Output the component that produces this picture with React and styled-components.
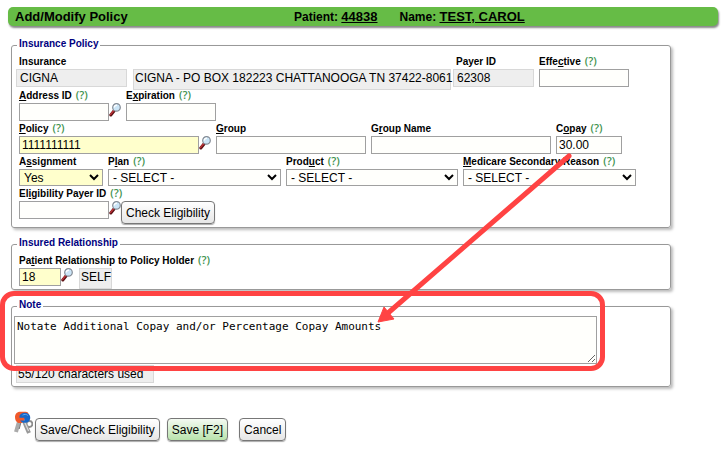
import styled, { createGlobalStyle } from 'styled-components'

const GlobalStyle = createGlobalStyle`
  * {
    box-sizing: border-box;
  }
  body {
    margin: 0;
    background: #fff;
    font-family: 'Liberation Sans', Arial, sans-serif;
    font-size: 12px;
    color: #000;
  }
`

const Page = styled.main`
  padding: 7px 6px 8px 8px;
`

const TitleBar = styled.header`
  display: grid;
  grid-template-columns: 279px auto auto 1fr;
  align-items: center;
  height: 19px;
  padding: 0 7px;
  border-radius: 5px;
  background: #66bc46;
  box-shadow: 1px 2px 2px #888;
  font-size: 12px;
  font-weight: bold;
`
const Title = styled.h1`
  margin: 0;
  font-size: 13px;
`
const TitleItem = styled.div`
  margin-right: 22px;
  white-space: nowrap;
`
const TitleLink = styled.a`
  font-size: 13px;
  color: #000;
`

const Form = styled.form`
  padding: 3px 47px 0 3px;
`
const Panel = styled.fieldset`
  margin: 10px 0 0;
  padding: ${(p) => (p.$note ? 4 : 5)}px 7px ${(p) => (p.$flush ? 0 : 3)}px;
  min-width: 0;
  border: 1px solid #999;
  border-radius: 3px;
  box-shadow: 2px 2px 3px #bbb;
`
const Legend = styled.legend`
  margin-left: -2px;
  padding: 0 2px 2px;
  font-size: 10px;
  font-weight: bold;
  line-height: 10px;
  color: #000080;
`

const Row = styled.div`
  display: flex;
  align-items: flex-start;
  gap: 5px;
  margin-bottom: ${(p) => (p.$tight ? 0 : 2)}px;
`
const Field = styled.div`
  position: relative;
  flex: none;
`
const FieldHead = styled.div`
  display: flex;
  height: 13px;
  font-size: 10px;
  font-weight: bold;
  line-height: 12px;
  white-space: nowrap;
`
const Help = styled.span`
  margin-left: 4px;
  font-family: 'Open Sans', sans-serif;
  font-size: 11px;
  font-weight: 600;
  line-height: 9px;
  color: #3f9350;
`
const Control = styled.div`
  display: flex;
  align-items: flex-start;
`
const TextInput = styled.input`
  width: ${(p) => p.$w}px;
  height: 18px;
  padding: 0 2px;
  border: 1px solid #a0a0a0;
  background: ${(p) => (p.$required ? '#ffffcc' : '#fffffc')};
  font: inherit;
`
const Select = styled.select`
  display: block;
  width: ${(p) => p.$w}px;
  height: 17px;
  padding: 0;
  border: 1px solid #a0a0a0;
  border-radius: 0;
  background: ${(p) => (p.$required ? '#ffffcc' : '#fffffc')};
  font: inherit;
  color: #000;
`
const Output = styled.output`
  display: block;
  width: ${(p) => p.$w}px;
  height: ${(p) => (p.$tall ? 21 : 18)}px;
  margin-left: ${(p) => p.$shift || 0}px;
  padding: 0 ${(p) => (p.$tall ? 1 : 3)}px;
  border: 1px solid #d8d8d8;
  background: #eee;
  line-height: 16px;
  white-space: nowrap;
`
const Counter = styled(Output)`
  margin: 1px 0 0 2px;
  padding: 0 1px;
`
const Button = styled.button`
  height: 23px;
  padding: 0 4px;
  border: 1px solid #777;
  border-radius: 4px;
  background: ${(p) =>
    p.$primary
      ? 'linear-gradient(#f4faf2, #b9e3ac)'
      : 'linear-gradient(#fff, #e6e6e6)'};
  box-shadow: 0 1px 1px #aaa;
  font: inherit;
  white-space: nowrap;
`
const IconButton = styled.button`
  width: 12px;
  height: 14px;
  padding: 0;
  border: 0;
  background: none;
  line-height: 0;
`
const LensSvg = styled.svg`
  display: block;
`

const NoteBody = styled.div`
  margin-left: -5px;
`
const NoteWrap = styled.div`
  position: relative;
  width: 583px;
  max-width: 100%;
`
const NoteArea = styled.textarea`
  display: block;
  width: 100%;
  height: 48px;
  padding: 2px;
  border: 1px solid #a0a0a0;
  background: #fffffc;
  font-family: 'DejaVu Sans Mono', monospace;
  font-size: 11px;
  line-height: 15px;
`
const Highlight = styled.div`
  position: absolute;
  inset: -25px -8px -7px -14px;
  border: 5px solid #ff4343;
  border-radius: 14px;
  pointer-events: none;
`
const ArrowSvg = styled.svg`
  position: absolute;
  z-index: 2;
  top: 28px;
  right: 49px;
  pointer-events: none;
`
const Actions = styled.div`
  display: flex;
  align-items: flex-end;
  gap: 11px;
  padding: 24px 0 0 3px;
`
const ButtonGroup = styled.div`
  display: flex;
  align-items: flex-end;
  gap: 7px;
`
const KeyedButton = styled.div`
  display: flex;
  align-items: flex-start;
  gap: 2px;

  button {
    margin-top: 7px;
  }
`

const Lens = () => (
  <LensSvg width="12" height="14" viewBox="0 0 12 14">
    <path d="M1.800 12 5 8" stroke="#5c1214" strokeWidth="3" strokeLinecap="round" />
    <path d="M1.600 11.400 4.600 7.800" stroke="#c0343a" strokeWidth="1.400" strokeLinecap="round" />
    <circle cx="7.500" cy="4.400" r="3.800" fill="#cbe5f7" stroke="#848b94" strokeWidth="1.200" />
    <path d="M5.300 4.600a2.400 2.400 0 0 1 2.600-2.400" stroke="#fff" strokeWidth="1.400" fill="none" />
  </LensSvg>
)

const Keys = () => (
  <svg width="19" height="24" viewBox="0 0 19 24" aria-hidden="true">
    <circle cx="15.400" cy="13" r="3" fill="none" stroke="#8d8d8d" strokeWidth="1.800" />
    <path d="M5.500 9 4 14 2 21" stroke="#aaa" strokeWidth="4" fill="none" />
    <path d="M7 11 5.200 18" stroke="#777" strokeWidth="1" />
    <path d="M10 10l2 5 3 7" stroke="#999" strokeWidth="4" fill="none" />
    <path d="M10.600 11l4 9" stroke="#ddd" strokeWidth="1.200" />
    <path d="M1 6c0-3.500 2.600-5.200 5.400-5.200h5.200c2 0 3 1.400 3 2.600L8 12H4.400C2 11 1 9 1 6Z" fill="#f0592b" />
    <path d="M5.600 4.600C7 2.200 9 1.400 11.400 1.800c3.600.5 5.200 2.800 4.800 5.800-.4 3-2.800 4.400-5.600 4.200-2.200-.1-3.600-1-4.400-2.400h4.200V6.800H5.400Z" fill="#1767c9" />
    <path d="M8.600 4.200c1.600-1.200 3.800-1 5.200.2" stroke="#62a8ef" strokeWidth="1" fill="none" />
  </svg>
)

const Arrow = () => (
  <ArrowSvg width="200" height="180" viewBox="0 0 200 180">
    <path d="M196 5 15 162" stroke="#ff4343" strokeWidth="5" strokeLinecap="round" />
    <path d="M5 171 11 156 21 168Z" fill="#ff4343" stroke="#ff4343" />
  </ArrowSvg>
)

// access key letter is wrapped in *stars*
const LabelText = ({ text }) => {
  const [before, key, after] = text.split('*')
  return (
    <>
      {before}
      {key && <u>{key}</u>}
      {after}
    </>
  )
}

const Labeled = ({ id, label, help, children }) => (
  <Field>
    <FieldHead>
      <label htmlFor={id}>
        <LabelText text={label} />
      </label>
      {help && <Help>(?)</Help>}
    </FieldHead>
    <Control>{children}</Control>
  </Field>
)

const Lookup = ({ label }) => (
  <IconButton type="button" aria-label={label}>
    <Lens />
  </IconButton>
)

const App = () => {
  return (
    <>
      <GlobalStyle />
      <Page>
        <TitleBar>
          <Title>Add/Modify Policy</Title>
          <TitleItem>
            Patient: <TitleLink href="#patient">44838</TitleLink>
          </TitleItem>
          <TitleItem>
            Name: <TitleLink href="#name">TEST, CAROL</TitleLink>
          </TitleItem>
        </TitleBar>
        <Form>
          <Panel>
            <Legend>Insurance Policy</Legend>
            <Row $tight>
              <Labeled id="insurance" label="Insurance">
                <Output id="insurance" $w={111} $shift={-3}>CIGNA</Output>
                <Output $w={318} $shift={6} $tall>
                  CIGNA - PO BOX 182223 CHATTANOOGA TN 37422-8061
                </Output>
              </Labeled>
              <Labeled id="payer" label="Payer ID">
                <Output id="payer" $w={81} $shift={-3}>62308</Output>
              </Labeled>
              <Labeled id="effective" label="Effe*c*tive" help>
                <TextInput id="effective" $w={90} />
              </Labeled>
            </Row>
            <Row>
              <Labeled id="address" label="*A*ddress ID" help>
                <TextInput id="address" $w={90} />
                <Lookup label="Find address" />
              </Labeled>
              <Labeled id="expiration" label="E*x*piration" help>
                <TextInput id="expiration" $w={90} />
              </Labeled>
            </Row>
            <Row>
              <Labeled id="policy" label="*P*olicy" help>
                <TextInput id="policy" $w={180} $required defaultValue="1111111111" />
                <Lookup label="Find policy" />
              </Labeled>
              <Labeled id="group" label="*G*roup">
                <TextInput id="group" $w={150} />
              </Labeled>
              <Labeled id="groupName" label="G*r*oup Name">
                <TextInput id="groupName" $w={180} />
              </Labeled>
              <Labeled id="copay" label="C*o*pay" help>
                <TextInput id="copay" $w={66} defaultValue="30.00" />
                <Arrow />
              </Labeled>
            </Row>
            <Row>
              <Labeled id="assignment" label="A*s*signment">
                <Select id="assignment" $w={84} $required>
                  <option>Yes</option>
                </Select>
              </Labeled>
              <Labeled id="plan" label="P*l*an" help>
                <Select id="plan" $w={173}>
                  <option>- SELECT -</option>
                </Select>
              </Labeled>
              <Labeled id="product" label="Prod*u*ct" help>
                <Select id="product" $w={172}>
                  <option>- SELECT -</option>
                </Select>
              </Labeled>
              <Labeled id="medicare" label="*M*edicare Secondary Reason" help>
                <Select id="medicare" $w={173}>
                  <option>- SELECT -</option>
                </Select>
              </Labeled>
            </Row>
            <Labeled id="eligibility" label="El*i*gibility Payer ID" help>
              <TextInput id="eligibility" $w={90} />
              <Lookup label="Find payer" />
              <Button type="button">Check Eligibility</Button>
            </Labeled>
          </Panel>
          <Panel $flush>
            <Legend>Insured Relationship</Legend>
            <Labeled id="relation" label="Pa*t*ient Relationship to Policy Holder" help>
              <TextInput id="relation" $w={42} $required defaultValue="18" />
              <Lookup label="Find relationship" />
              <Output $w={33} $shift={6} $tall>SELF</Output>
            </Labeled>
          </Panel>
          <Panel $note>
            <Legend>Note</Legend>
            <NoteBody>
              <NoteWrap>
                <NoteArea
                  aria-label="Note"
                  defaultValue="Notate Additional Copay and/or Percentage Copay Amounts"
                />
                <Highlight />
              </NoteWrap>
              <Counter $w={138}>55/120 characters used</Counter>
            </NoteBody>
          </Panel>
          <Actions>
            <ButtonGroup>
              <KeyedButton>
                <Keys />
                <Button type="button">Save/Check Eligibility</Button>
              </KeyedButton>
              <Button type="button" $primary>Save [F2]</Button>
            </ButtonGroup>
            <Button type="button">Cancel</Button>
          </Actions>
        </Form>
      </Page>
    </>
  )
}

export default App
